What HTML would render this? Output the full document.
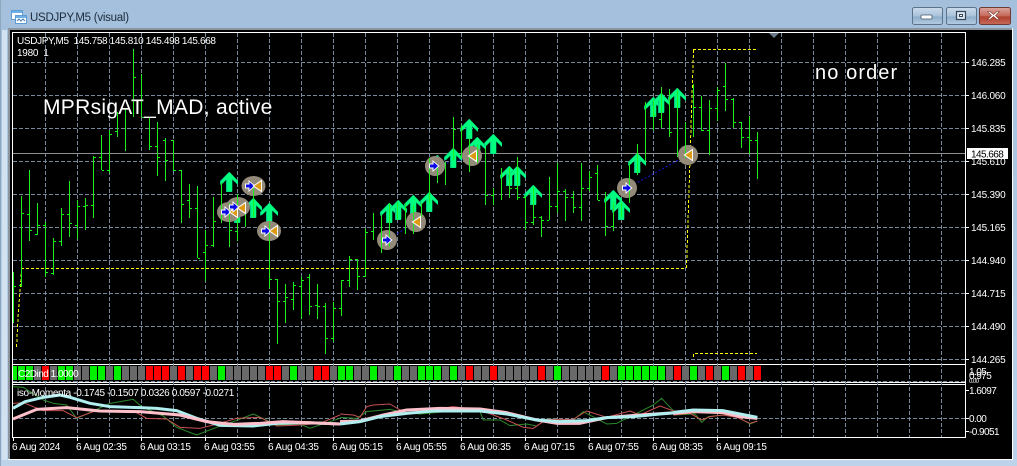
<!DOCTYPE html>
<html><head><meta charset="utf-8"><style>
html,body{margin:0;padding:0;width:1017px;height:466px;overflow:hidden;background:#bcd3ea}
svg{display:block}
text{font-family:"Liberation Sans",sans-serif;font-size:10px;fill:#fff;letter-spacing:-.25px}
.c{shape-rendering:crispEdges}
.p{letter-spacing:-.55px}
</style></head><body>
<svg width="1017" height="466" viewBox="0 0 1017 466" xmlns="http://www.w3.org/2000/svg">
<defs>
<linearGradient id="bg" x1="0" y1="0" x2="0" y2="1"><stop offset="0" stop-color="#a3bfdb"/><stop offset=".2" stop-color="#a9c4df"/><stop offset="1" stop-color="#bcd3ea"/></linearGradient>
<linearGradient id="b1" x1="0" y1="0" x2="0" y2="1"><stop offset="0" stop-color="#cddcec"/><stop offset=".5" stop-color="#a9c2da"/><stop offset=".55" stop-color="#8fadc9"/><stop offset="1" stop-color="#b5cde3"/></linearGradient>
<linearGradient id="b2" x1="0" y1="0" x2="0" y2="1"><stop offset="0" stop-color="#dca79f"/><stop offset=".5" stop-color="#c4675a"/><stop offset=".55" stop-color="#b03f2e"/><stop offset="1" stop-color="#c86b5a"/></linearGradient>
<g id="a"><path d="M0-10L9-1V3L3-2.500V10H-3V-2.500L-9 3V-1Z" fill="#00c489"/><path d="M.6-10L9-1V2.500L3.300-3V9.500H-1.800V-3L-7.500 2.500-8-1Z" fill="#00ff7f"/></g>
<g id="in"><path d="M-5-2.500H-1.500V-6L5.500 0-1.500 6V2.500H-5Z" fill="#fff"/><path d="M-4-1.500H-.5V-4L4 0-.5 4V1.500H-4Z" fill="#0a0ae6"/></g>
<g id="out"><path d="M5-6.500V6.500L-4.500 0Z" fill="#fff"/><path d="M4-4.500V4.500L-2.800 0Z" fill="#dc9a14"/></g>
</defs>
<rect width="1017" height="466" fill="url(#bg)"/>
<rect x="0" y="0" width="1" height="466" fill="#8ea6bd"/>
<rect x="2" y="30" width="5" height="430" fill="#d3e2f1"/>
<rect x="8" y="28" width="1004" height="2" fill="#8c959d"/>
<rect x="8" y="28" width="2" height="432" fill="#8c959d"/>
<rect x="10" y="30" width="1002" height="429" fill="#000"/>
<rect x="1012" y="28" width="1" height="432" fill="#fff"/>
<rect x="8" y="459" width="1005" height="1" fill="#fff"/>

<!-- title icon -->
<rect x="11.500" y="10.500" width="11" height="9" fill="#fff" stroke="#5d9bd4"/>
<rect x="15.500" y="15.500" width="11" height="8" fill="#fff" stroke="#5d9bd4"/>
<path d="M12 11h10v2H12ZM16 16h10v2H16Z" fill="#6fb0e6"/>
<path d="M17 21l2-2 2 2 2-2 2 2" fill="none" stroke="#4a7fb5"/>
<text x="30" y="21" style="font-size:11.500px;fill:#1c2b3c;letter-spacing:-.25px">USDJPY,M5 (visual)</text>

<!-- window buttons -->
<rect x="912.500" y="7.500" width="30" height="17" rx="2" fill="url(#b1)" stroke="#5b7288"/>
<rect x="921" y="15" width="11" height="4" rx="1" fill="#fff" stroke="#45586b" stroke-width=".8"/>
<rect x="946.500" y="7.500" width="30" height="17" rx="2" fill="url(#b1)" stroke="#5b7288"/>
<rect x="956.500" y="11.500" width="9" height="8" fill="#dce7f1" stroke="#33465a" stroke-width="1.200"/><rect x="959" y="14" width="4" height="3" fill="#33465a"/><rect x="960" y="15" width="2" height="1" fill="#fff"/>
<rect x="979.500" y="7.500" width="31" height="17" rx="2" fill="url(#b2)" stroke="#6e3a36"/>
<path d="M990 11.500l3.500 3 3.500-3 2.500 0-4 4 4 4h-2.500l-3.500-3-3.500 3H987.500l4-4-4-4Z" fill="#fff" stroke="#7d3a32" stroke-width=".6"/>

<!-- chart frame -->
<g class="c">
<path d="M12.500 32.500H965.500V437.500H12.500ZM12 364.500H966M12 382.500H966M12 384.500H966" fill="none" stroke="#fff"/>
<!-- grid -->
<path d="M13 62.500H965M13 95.500H965M13 128.500H965M13 161.500H965M13 194.500H965M13 227.500H965M13 260.500H965M13 293.500H965M13 326.500H965M13 359.500H965M13 381.500H965M13 418.500H965" fill="none" stroke="#77889a" stroke-dasharray="4 2"/>
<path d="M45.500 33V437M77.500 33V437M109.500 33V437M141.500 33V437M173.500 33V437M205.500 33V437M237.500 33V437M269.500 33V437M301.500 33V437M333.500 33V437M365.500 33V437M397.500 33V437M429.500 33V437M461.500 33V437M493.500 33V437M525.500 33V437M557.500 33V437M589.500 33V437M621.500 33V437M653.500 33V437M685.500 33V437M717.500 33V437M749.500 33V437M781.500 33V437M813.500 33V437M845.500 33V437M877.500 33V437M909.500 33V437M941.500 33V437" fill="none" stroke="#77889a" stroke-dasharray="4 2"/>
<path d="M13 153.500H965" stroke="#8f8f8f" fill="none"/>
<!-- histogram -->
<g fill="#696969">
<rect x="34" y="366" width="7" height="14"/><rect x="50" y="366" width="7" height="14"/><rect x="74" y="366" width="15" height="14"/><rect x="106" y="366" width="7" height="14"/><rect x="122" y="366" width="23" height="14"/><rect x="170" y="366" width="7" height="14"/><rect x="186" y="366" width="7" height="14"/><rect x="210" y="366" width="7" height="14"/><rect x="226" y="366" width="39" height="14"/><rect x="282" y="366" width="7" height="14"/><rect x="298" y="366" width="15" height="14"/><rect x="330" y="366" width="7" height="14"/><rect x="354" y="366" width="15" height="14"/><rect x="378" y="366" width="15" height="14"/><rect x="402" y="366" width="15" height="14"/><rect x="442" y="366" width="7" height="14"/><rect x="458" y="366" width="7" height="14"/><rect x="474" y="366" width="15" height="14"/><rect x="498" y="366" width="39" height="14"/><rect x="546" y="366" width="7" height="14"/><rect x="562" y="366" width="39" height="14"/><rect x="610" y="366" width="7" height="14"/><rect x="666" y="366" width="7" height="14"/><rect x="682" y="366" width="7" height="14"/><rect x="698" y="366" width="7" height="14"/><rect x="714" y="366" width="7" height="14"/><rect x="730" y="366" width="7" height="14"/><rect x="746" y="366" width="7" height="14"/>
</g>
<g fill="#00f000">
<rect x="13" y="366" width="4" height="14"/><rect x="18" y="366" width="7" height="14"/><rect x="26" y="366" width="7" height="14"/><rect x="58" y="366" width="7" height="14"/><rect x="66" y="366" width="7" height="14"/><rect x="90" y="366" width="7" height="14"/><rect x="98" y="366" width="7" height="14"/><rect x="114" y="366" width="7" height="14"/><rect x="218" y="366" width="7" height="14"/><rect x="290" y="366" width="7" height="14"/><rect x="338" y="366" width="7" height="14"/><rect x="346" y="366" width="7" height="14"/><rect x="370" y="366" width="7" height="14"/><rect x="394" y="366" width="7" height="14"/><rect x="418" y="366" width="7" height="14"/><rect x="426" y="366" width="7" height="14"/><rect x="434" y="366" width="7" height="14"/><rect x="450" y="366" width="7" height="14"/><rect x="554" y="366" width="7" height="14"/><rect x="618" y="366" width="7" height="14"/><rect x="626" y="366" width="7" height="14"/><rect x="634" y="366" width="7" height="14"/><rect x="642" y="366" width="7" height="14"/><rect x="650" y="366" width="7" height="14"/><rect x="658" y="366" width="7" height="14"/><rect x="690" y="366" width="7" height="14"/><rect x="722" y="366" width="7" height="14"/>
</g>
<g fill="#ff0000">
<rect x="42" y="366" width="7" height="14"/><rect x="146" y="366" width="7" height="14"/><rect x="154" y="366" width="7" height="14"/><rect x="162" y="366" width="7" height="14"/><rect x="178" y="366" width="7" height="14"/><rect x="194" y="366" width="7" height="14"/><rect x="202" y="366" width="7" height="14"/><rect x="266" y="366" width="7" height="14"/><rect x="274" y="366" width="7" height="14"/><rect x="314" y="366" width="7" height="14"/><rect x="322" y="366" width="7" height="14"/><rect x="466" y="366" width="7" height="14"/><rect x="490" y="366" width="7" height="14"/><rect x="538" y="366" width="7" height="14"/><rect x="602" y="366" width="7" height="14"/><rect x="674" y="366" width="7" height="14"/><rect x="706" y="366" width="7" height="14"/><rect x="738" y="366" width="7" height="14"/><rect x="754" y="366" width="7" height="14"/>
</g>
<!-- separators between histogram cells -->
<path d="M17 373H762" fill="none" stroke="#000" stroke-width="14" stroke-dasharray="1 7"/>
</g>

<!-- yellow level -->
<g class="c" fill="none" stroke="#ffff00" stroke-dasharray="3 2">
<path d="M16.500 347L18.500 310 20.500 285 21.500 269"/>
<path d="M21 268.500H686"/>
<path d="M686.500 268L693.500 50"/>
<path d="M693 49.500H756"/>
<path d="M693.500 357V353.500H757"/>
</g>

<!-- blue dotted trade lines -->
<g fill="none" stroke="#1515e0" stroke-width="1" stroke-dasharray="2 2">
<path d="M387 240L416 222M435 166L472 157M627 188L688 155M229 212L237 207"/>
</g>

<!-- arrows -->
<use href="#a" x="229" y="182"/><use href="#a" x="237" y="213"/><use href="#a" x="253" y="208"/><use href="#a" x="269" y="213"/><use href="#a" x="389" y="213"/><use href="#a" x="398" y="210"/><use href="#a" x="413" y="205"/><use href="#a" x="429" y="202"/><use href="#a" x="437" y="165"/><use href="#a" x="453" y="158"/><use href="#a" x="469" y="129"/><use href="#a" x="477" y="147"/><use href="#a" x="493" y="144"/><use href="#a" x="509" y="176"/><use href="#a" x="517" y="176"/><use href="#a" x="533" y="195"/><use href="#a" x="613" y="200"/><use href="#a" x="621" y="210"/><use href="#a" x="637" y="163"/><use href="#a" x="653" y="107"/><use href="#a" x="661" y="103"/><use href="#a" x="677" y="98"/>

<!-- circles -->
<g fill="#948a7a">
<ellipse cx="253.500" cy="186" rx="12" ry="10"/><ellipse cx="229" cy="212" rx="12" ry="10"/><ellipse cx="238" cy="207" rx="12" ry="10"/><ellipse cx="269" cy="231" rx="12" ry="10"/><circle cx="387" cy="240" r="10"/><circle cx="416" cy="222" r="10"/><circle cx="435" cy="166" r="10"/><circle cx="472" cy="156" r="10"/><circle cx="627" cy="188" r="10"/><circle cx="688" cy="155" r="10"/>
</g>

<!-- OHLC bars -->
<g class="c" fill="none" stroke="#1cf01c">
<path d="M13.500 272V323M14 286.500h2M21.500 196V287M19 285.500h2M22 213.500h2M29.500 170V241M27 214.500h2M30 230.500h2M37.500 203V235M35 234.500h2M38 225.500h2M45.500 222V277M43 225.500h2M46 272.500h2M53.500 238V275M51 273.500h2M54 241.500h2M61.500 208V246M59 241.500h2M62 214.500h2M69.500 181V237M67 214.500h2M70 223.500h2M77.500 200V239M75 225.500h2M78 206.500h2M85.500 198V230M83 206.500h2M86 205.500h2M93.500 156V218M91 205.500h2M94 157.500h2M101.500 135V170M99 157.500h2M102 170.500h2M109.500 130V173M107 170.500h2M110 134.500h2M117.500 112V137M115 131.500h2M125.500 108V151M133.500 49V117M134 77.500h2M141.500 74V117M142 117.500h2M149.500 117V150M150 146.500h2M157.500 122V176M155 146.500h2M158 157.500h2M165.500 138V181M163 140.500h2M166 160.500h2M173.500 140V171M171 140.500h2M174 170.500h2M181.500 170V223M179 170.500h2M182 204.500h2M189.500 184V218M187 200.500h2M190 208.500h2M197.500 186V258M195 208.500h2M198 258.500h2"/>
<path d="M205.500 230V281M203 252.500h2M206 245.500h2M213.500 197V247M211 245.500h2M214 221.500h2M221.500 183V223M229.500 203V247M230 230.500h2M237.500 194V241M235 231.500h2M245.500 208V227M253.500 187V218M269.500 222V289M270 279.500h2M277.500 279V344M275 279.500h2M278 301.500h2M285.500 284V323M283 301.500h2M286 297.500h2M293.500 282V310M291 299.500h2M294 285.500h2M301.500 277V319M299 286.500h2M302 280.500h2M309.500 274V315M307 277.500h2M310 306.500h2M317.500 284V319M315 305.500h2M318 306.500h2M325.500 303V354M323 306.500h2M326 338.500h2M333.500 302V342M331 338.500h2M334 308.500h2M341.500 280V316M339 308.500h2M342 280.500h2M349.500 256V287M347 280.500h2M350 259.500h2M357.500 259V290M355 259.500h2M358 276.500h2M365.500 229V277M363 276.500h2M366 232.500h2M373.500 213V240M371 231.500h2M381.500 215V253M389.500 203V247M397.500 202V220M405.500 203V234M413.500 205V234M421.500 203V217M429.500 158V203M437.500 165V183M445.500 162V185M453.500 117V160M454 129.500h2M461.500 125V158M469.500 138V172M477.500 145V163M485.500 148V205M486 195.500h2M493.500 188V205M491 195.500h2"/>
<path d="M501.500 168V200M509.500 168V198M510 188.500h2M517.500 157V200M515 188.500h2M518 197.500h2M525.500 195V230M523 197.500h2M526 222.500h2M533.500 187V225M531 222.500h2M534 217.500h2M541.500 216V237M539 217.500h2M542 220.500h2M549.500 177V220M547 220.500h2M550 206.500h2M557.500 163V213M555 206.500h2M558 191.500h2M565.500 189V221M563 191.500h2M566 197.500h2M573.500 191V213M571 197.500h2M574 207.500h2M581.500 163V221M579 207.500h2M582 188.500h2M589.500 171V191M587 188.500h2M590 177.500h2M597.500 165V200M595 173.500h2M598 200.500h2M605.500 192V236M606 226.500h2M613.500 202V231M611 226.500h2M621.500 203V217M629.500 163V203M637.500 144V175M645.500 102V161M653.500 100V130M654 115.500h2M661.500 87V128M659 119.500h2M669.500 89V137M670 132.500h2M677.500 90V157M685.500 122V158M693.500 84V137M694 107.500h2M701.500 96V131M699 107.500h2M702 130.500h2M709.500 100V155M707 130.500h2M710 108.500h2M717.500 87V121M715 108.500h2M718 90.500h2M725.500 63V111M723 86.500h2M726 99.500h2M733.500 98V128M731 99.500h2M734 122.500h2M741.500 122V148M739 122.500h2M742 137.500h2M749.500 116V154M747 137.500h2M750 140.500h2M757.500 132V179M755 140.500h2"/>
</g>

<!-- labels on circles -->
<use href="#in" x="250" y="186"/><use href="#out" x="257" y="186"/>
<use href="#in" x="226" y="212"/><use href="#out" x="233" y="212"/>
<use href="#in" x="234" y="207"/><use href="#out" x="241" y="208"/>
<use href="#in" x="266" y="231"/><use href="#out" x="273" y="231"/>
<use href="#in" x="387" y="240"/><use href="#out" x="416" y="222"/>
<use href="#in" x="434" y="166"/><use href="#out" x="472" y="156"/>
<use href="#in" x="627" y="188"/><use href="#out" x="688" y="155"/>

<!-- oscillator -->
<g fill="none" stroke-linejoin="round">
<g transform="translate(0,340) scale(.3333)">
<polyline stroke="#2a8a2a" stroke-width="3" points="39,140 70,142 130,180 160,190 200,195 230,235 260,222 330,190 400,178 425,200 490,228 530,262 590,285 650,262 700,245 760,222 830,255 900,252 930,265 1020,235"/>
<polyline stroke="#c85050" stroke-width="3" points="39,190 70,188 100,200 130,212 190,212 230,233 280,215 400,213 440,235 500,237 540,262 600,265 660,250 710,235 780,232 830,258 900,255 960,250 1020,225"/>
<polyline stroke="#b0eef0" stroke-width="9" points="39,205 75,185 130,172 180,165 210,172 270,190 330,200 420,203 470,205 530,212 590,235 660,256 760,258 830,250 920,248 1020,252"/>
<polyline stroke="#ffc0cb" stroke-width="9" points="39,237 110,208 200,203 300,213 420,215 540,225 620,245 700,253 780,250 850,245 1020,252"/>
</g>
<g transform="translate(340,340) scale(.3333)">
<polyline stroke="#2a8a2a" stroke-width="3" points="0,232 50,235 80,215 150,208 180,215 240,222 320,215 420,215 430,240 480,240 510,257 560,252 590,258 620,237 700,240 730,215 800,252 830,250 900,215 940,195 965,175 1000,212 1020,225"/>
<polyline stroke="#c85050" stroke-width="3" points="0,222 40,225 60,232 80,200 100,195 150,192 180,210 280,208 340,200 420,210 500,240 550,262 580,265 620,238 700,238 740,213 800,232 870,213 900,225 960,198 1020,220"/>
<polyline stroke="#ffc0cb" stroke-width="9" points="0,245 60,243 130,225 200,210 300,205 420,207 500,218 590,240 650,250 720,250 800,233 900,225 1020,217"/>
<polyline stroke="#b0eef0" stroke-width="9" points="0,252 60,245 120,230 200,220 280,213 420,213 500,222 590,240 660,245 740,242 800,233 880,230 960,222 1020,217"/>
</g>
<g transform="translate(680,340) scale(.3333)">
<polyline stroke="#2a8a2a" stroke-width="3" points="-20,225 45,222 65,247 85,230 130,225 170,230 210,252 232,243"/>
<polyline stroke="#c85050" stroke-width="3" points="-20,225 30,220 65,240 90,230 130,225 170,232 210,250 232,243"/>
<polyline stroke="#ffc0cb" stroke-width="9" points="-20,220 40,215 130,218 180,230 232,235"/>
<polyline stroke="#b0eef0" stroke-width="9" points="-20,217 40,210 130,212 180,222 232,232"/>
</g>
</g>

<!-- top marker -->
<path d="M769 33h10l-5 5Z" fill="#6a7a8a"/>

<!-- axis ticks -->
<g class="c" fill="none" stroke="#fff">
<path d="M966 62.500h3M966 95.500h3M966 128.500h3M966 161.500h3M966 194.500h3M966 227.500h3M966 260.500h3M966 293.500h3M966 326.500h3M966 359.500h3M966 390.500h3M966 418.500h3M966 431.500h3"/>
<path d="M13.500 438v3M77.500 438v3M141.500 438v3M205.500 438v3M269.500 438v3M333.500 438v3M397.500 438v3M461.500 438v3M525.500 438v3M589.500 438v3M653.500 438v3M717.500 438v3"/>
</g>

<!-- price axis -->
<g class="p">
<text x="971" y="66">146.285</text>
<text x="971" y="99">146.060</text>
<text x="971" y="132">145.835</text>
<text x="971" y="165">145.610</text>
<text x="971" y="198">145.390</text>
<text x="971" y="231">145.165</text>
<text x="971" y="264">144.940</text>
<text x="971" y="297">144.715</text>
<text x="971" y="330">144.490</text>
<text x="971" y="363">144.265</text>
</g>
<rect x="967" y="148" width="41" height="11" fill="#fff"/>
<text x="971" y="157.500" class="p" style="fill:#000">145.668</text>
<text x="969" y="375" class="p">1.05</text>
<text x="969" y="379" class="p">0.975</text>
<text x="969" y="383" class="p" style="font-size:6px">0.00</text>
<text x="969" y="394" class="p">1.6097</text>
<text x="969" y="422" class="p">0.00</text>
<text x="969" y="435" class="p">-0.9051</text>

<!-- time axis -->
<text x="12" y="450">6 Aug 2024</text>
<text x="76" y="450">6 Aug 02:35</text>
<text x="140" y="450">6 Aug 03:15</text>
<text x="204" y="450">6 Aug 03:55</text>
<text x="268" y="450">6 Aug 04:35</text>
<text x="332" y="450">6 Aug 05:15</text>
<text x="396" y="450">6 Aug 05:55</text>
<text x="460" y="450">6 Aug 06:35</text>
<text x="524" y="450">6 Aug 07:15</text>
<text x="588" y="450">6 Aug 07:55</text>
<text x="652" y="450">6 Aug 08:35</text>
<text x="716" y="450">6 Aug 09:15</text>

<!-- chart text -->
<text x="17" y="44" style="white-space:pre;letter-spacing:-.35px">USDJPY,M5  145.758 145.810 145.498 145.668</text>
<text x="17" y="56" style="white-space:pre">1980  1</text>
<text x="43" y="114" style="font-size:21px;letter-spacing:.3px">MPRsigAT_MAD, active</text>
<text x="815" y="79" style="font-size:20px;letter-spacing:1.1px">no order</text>
<text x="18" y="377" style="letter-spacing:-.5px">C2Dind 1.0000</text>
<text x="17" y="396" style="letter-spacing:-.36px">iso-Momenta -0.1745 -0.1507 0.0326 0.0597 -0.0271</text>
</svg>
</body></html>
